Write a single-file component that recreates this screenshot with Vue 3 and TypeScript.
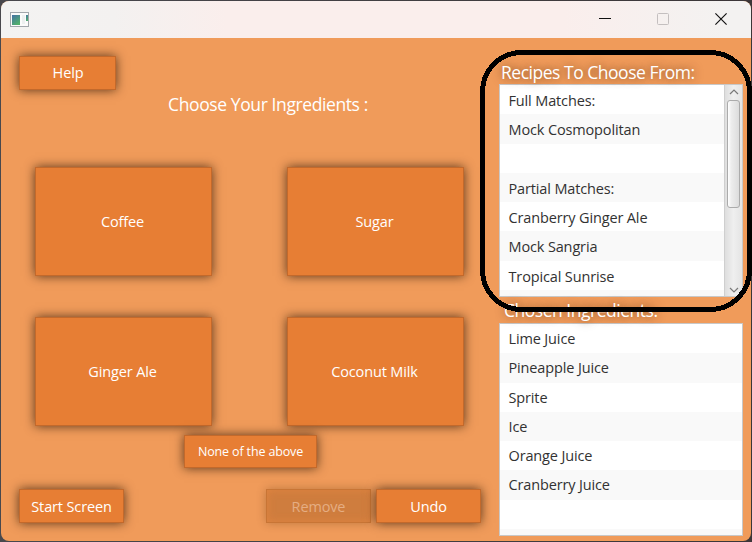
<script setup lang="ts">
const ingredients: string[] = ['Coffee', 'Sugar', 'Ginger Ale', 'Coconut Milk']
const recipes: string[] = [
  'Full Matches:',
  'Mock Cosmopolitan',
  '',
  'Partial Matches:',
  'Cranberry Ginger Ale',
  'Mock Sangria',
  'Tropical Sunrise',
  '',
]
const chosen: string[] = ['Lime Juice', 'Pineapple Juice', 'Sprite', 'Ice', 'Orange Juice', 'Cranberry Juice', '', '']
</script>

<template>
  <div class="desktop">
    <div class="window">
      <header class="titlebar">
        <svg class="app-icon" width="19" height="15" viewBox="0 0 19 15">
          <defs>
            <linearGradient id="pic" x1="0" y1="0" x2="0.6" y2="1">
              <stop offset="0" stop-color="#4471a5" />
              <stop offset="1" stop-color="#51b06c" />
            </linearGradient>
          </defs>
          <rect x="0.5" y="0.5" width="18" height="14" fill="#fbfbfb" stroke="#a2a7ac" />
          <rect x="2" y="3" width="8" height="10" fill="url(#pic)" />
          <rect x="12" y="3" width="3" height="9" fill="#edf0f0" />
          <rect x="16" y="3" width="2" height="6" fill="url(#pic)" />
        </svg>
        <div class="controls">
          <svg width="12" height="12" viewBox="0 0 12 12"><path d="M0 5.5H12" stroke="#111" /></svg>
          <svg width="12" height="12" viewBox="0 0 12 12">
            <rect x="0.5" y="0.5" width="11" height="11" rx="1" fill="none" stroke="#c4bfbf" />
          </svg>
          <svg width="12" height="12" viewBox="0 0 12 12">
            <path d="M0.4 0.4L11.6 11.6M11.6 0.4L0.4 11.6" stroke="#111" stroke-width="1.15" />
          </svg>
        </div>
      </header>

      <main class="content">
        <section class="left">
          <button class="btn help">Help</button>
          <h1 class="heading">Choose Your Ingredients :</h1>
          <div class="choices">
            <button v-for="item in ingredients" :key="item" class="btn choice">{{ item }}</button>
          </div>
          <button class="btn none">None of the above</button>
          <div class="actions">
            <button class="btn action">Start Screen</button>
            <span class="spacer"></span>
            <button class="btn action" disabled>Remove</button>
            <button class="btn action">Undo</button>
          </div>
        </section>

        <section class="right">
          <h2 class="label">Recipes To Choose From:</h2>
          <div class="list">
            <ul class="rows">
              <li v-for="(r, i) in recipes" :key="i">{{ r }}</li>
            </ul>
            <div class="scrollbar">
              <svg width="10" height="6" viewBox="0 0 10 6"><path d="M1 5L5 1L9 5" /></svg>
              <div class="track"><div class="thumb"></div></div>
              <svg width="10" height="6" viewBox="0 0 10 6"><path d="M1 1L5 5L9 1" /></svg>
            </div>
          </div>
          <h2 class="label second">Chosen Ingredients:</h2>
          <div class="list">
            <ul class="rows chosen">
              <li v-for="(c, i) in chosen" :key="i">{{ c }}</li>
            </ul>
          </div>
        </section>
      </main>
    </div>
    <svg class="marker" width="272" height="262" viewBox="0 0 272 262">
      <rect x="2.5" y="2.5" width="267" height="257" rx="39" />
    </svg>
  </div>
</template>

<style>
body {
  background: #3b3a3c;
  overflow: hidden;
}
</style>

<style scoped>
.desktop {
  position: relative;
  box-sizing: border-box;
  width: 752px;
  height: 542px;
  padding: 1px;
  background: linear-gradient(90deg, #48484d, #3b3638);
  font-family: 'Open Sans', 'Noto Sans', sans-serif;
  font-size: 14.5px;
  letter-spacing: -0.14px;
}
.window {
  display: flex;
  flex-direction: column;
  height: 540px;
  border-radius: 8px;
  overflow: hidden;
  background: #f09b5a;
}
.titlebar {
  display: flex;
  justify-content: space-between;
  align-items: center;
  flex: none;
  box-sizing: border-box;
  height: 37px;
  padding: 0 24px 1px 9px;
  background: linear-gradient(90deg, #f3f3f2 0, #f3f1f0 15%, #faeeec 30%, #faeeec 75%, #f3f2f1 97%);
}
.controls {
  display: flex;
  gap: 46px;
}
.content {
  display: flex;
  flex: 1;
  min-height: 0;
}
.left {
  display: flex;
  flex-direction: column;
  box-sizing: border-box;
  width: 498px;
  padding: 18px 18px 0;
}
.btn {
  box-sizing: border-box;
  display: flex;
  align-items: center;
  justify-content: center;
  margin: 0;
  padding: 0;
  border: 1px solid #c3692b;
  border-radius: 0;
  background: #e77e34;
  box-shadow: 0 0 10px rgba(40, 20, 5, 0.75);
  color: #fff;
  font: inherit;
  letter-spacing: inherit;
}
.help {
  width: 97px;
  height: 34px;
  padding: 0 0 2px 1px;
}
.heading {
  margin: 2px 0 0;
  padding-left: 36px;
  height: 24px;
  line-height: 24px;
  font-size: 17.5px;
  font-weight: 400;
  letter-spacing: -0.4px;
  color: #fff;
  text-align: center;
}
.choices {
  display: grid;
  grid-template-columns: 177px 177px;
  gap: 41px 75px;
  margin: 51px 0 0 16px;
}
.choice {
  height: 109px;
  padding-right: 2px;
}
.none {
  width: 133px;
  height: 33px;
  margin: 9px 0 0 165px;
  font-size: 12.5px;
}
.actions {
  display: flex;
  gap: 5px;
  margin-top: 21px;
}
.spacer {
  flex: 1;
}
.action {
  width: 105px;
  height: 34px;
}
.btn:disabled {
  border-color: #c87535;
  background: #cf7d3e;
  box-shadow: inset 0 0 9px rgba(231, 135, 66, 0.7), 0 0 9px rgba(70, 35, 5, 0.3);
  color: #e5ad83;
}
.right {
  width: 244px;
}
.label {
  box-sizing: border-box;
  height: 46px;
  margin: 0;
  padding: 22px 0 0 2px;
  line-height: 24px;
  font-size: 17.5px;
  font-weight: 400;
  letter-spacing: -0.48px;
  color: #fff;
  text-shadow: 0 0 10px rgba(70, 35, 10, 0.75);
  white-space: nowrap;
}
.second {
  height: 26px;
  padding: 1px 0 0 5px;
}
.list {
  display: flex;
  box-sizing: border-box;
  height: 213px;
  border: 1px solid #c8c8c8;
  background: #fff;
  overflow: hidden;
}
.rows {
  flex: 1;
  margin: 0;
  padding: 0;
  list-style: none;
}
.rows li {
  box-sizing: border-box;
  height: 29.25px;
  padding-left: 8.5px;
  line-height: 31px;
  color: #323232;
}
.chosen li {
  line-height: 29px;
}
.rows li:nth-child(even) {
  background: #f9f9f9;
}
.scrollbar {
  display: flex;
  flex-direction: column;
  align-items: center;
  box-sizing: border-box;
  width: 18px;
  padding: 4px 0 3px;
  border-left: 1px solid #cfcfcf;
  background: linear-gradient(90deg, #dedede, #efefef 50%, #e4e4e4);
}
.scrollbar svg {
  flex: none;
  fill: none;
  stroke: #7a7a7a;
  stroke-width: 1.2;
}
.track {
  flex: 1;
  width: 13px;
  padding-top: 5px;
}
.thumb {
  box-sizing: border-box;
  height: 108px;
  border: 1px solid #ababab;
  border-radius: 3px;
  background: linear-gradient(90deg, #fff, #ededed 30%, #dcdcdc);
}
.marker {
  position: absolute;
  left: 480px;
  top: 50px;
  fill: none;
  stroke: #000;
  stroke-width: 5px;
  shape-rendering: crispEdges;
}
</style>
